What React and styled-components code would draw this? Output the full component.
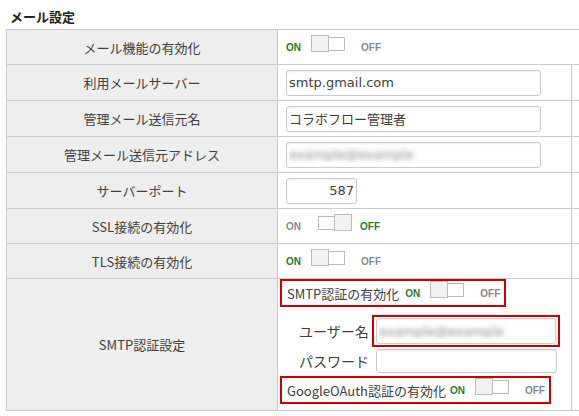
import React from 'react';
import styled, { createGlobalStyle } from 'styled-components';

const Global = createGlobalStyle`
html, body {
  margin:0;
  padding:0;
  background:#ffffff;
  overflow:hidden;
}
body {
  font-family:"Noto Sans CJK JP", sans-serif;
  font-size:13px;
  color:#3a3a3a;
}
`;

const Page = styled.div`
width:579px;
height:416px;
overflow:hidden;
`;

const Title = styled.h2`
margin:0 0 2px 0;
padding:7px 0 0 10px;
font-size:13px;
line-height:20px;
font-weight:bold;
color:#222222;
`;

const Table = styled.div`
display:grid;
grid-template-columns:271px 294px 60px;
margin-left:6px;
border-top:1px solid #cccccc;
border-left:1px solid #cccccc;
width:max-content;
`;

const Cell = styled.div`
box-sizing:border-box;
height:${props => props.h}px;
border-right:1px solid #cccccc;
border-bottom:1px solid #cccccc;
display:flex;
align-items:center;
`;

const LabelCell = styled(Cell)`
background-color:#eeeeee;
justify-content:center;
font-size:13px;
color:#404040;
`;

const ValueCell = styled(Cell)`
padding-left:8px;
grid-column:${props => props.span ? 'span 2' : 'auto'};
`;

const EmptyCell = styled(Cell)``;

const AuthCell = styled(Cell)`
flex-direction:column;
align-items:flex-start;
padding-left:2px;
color:#404040;
`;

const TextInput = styled.input`
box-sizing:border-box;
width:${props => props.w || 255}px;
height:${props => props.h || 26}px;
margin:0;
padding:0 2px;
border:1px solid #cccccc;
border-radius:3px;
box-shadow:inset 0 1px 2px rgba(0,0,0,0.07);
background:#ffffff;
font-family:"DejaVu Sans", "Noto Sans CJK JP", sans-serif;
font-size:13px;
color:#404040;
text-align:${props => props.right ? 'right' : 'left'};
outline:none;
`;

const BlurInput = styled(TextInput)`
color:transparent;
text-shadow:0 0 5px rgba(110,110,110,0.8);
`;

const StateText = styled.span`
font-family:"Liberation Sans", Arial, sans-serif;
font-size:10px;
font-weight:bold;
color:${props => props.active ? '#2b7a2b' : '#8a8a8a'};
margin-left:${props => props.gap || 0}px;
`;

const Track = styled.span`
position:relative;
box-sizing:border-box;
width:34px;
height:14px;
margin:0 ${props => props.on ? 16 : 8}px 6px ${props => props.on ? 10 : 17}px;
border:1px solid #bbbbbb;
background:#ffffff;
`;

const Knob = styled.span`
position:absolute;
top:-3px;
${props => props.on ? 'left:-1px;' : 'right:-1px;'}
box-sizing:border-box;
width:18px;
height:17px;
border:1px solid #bbbbbb;
background:#f2f2f2;
`;

const Highlight = styled.div`
box-sizing:border-box;
display:flex;
align-items:center;
border:2px solid #cc0000;
padding:${props => props.pad || '0 4px 0 5px'};
height:${props => props.h}px;
margin-top:${props => props.top || 0}px;
`;

const FieldRow = styled.div`
display:flex;
align-items:center;
padding-left:19px;
margin-top:${props => props.top || 0}px;
`;

const FieldLabel = styled.span`
width:73px;
font-size:14px;
`;

const Switch = ({on, gap}) => (
    <>
        <StateText active={on} gap={gap}>ON</StateText>
        <Track on={on}><Knob on={on}/></Track>
        <StateText active={!on}>OFF</StateText>
    </>
);

const App = () => {
    return(
        <Page>
            <Global/>
            <Title>メール設定</Title>
            <Table>
                <LabelCell h={35}>メール機能の有効化</LabelCell>
                <ValueCell h={35} span><Switch on/></ValueCell>

                <LabelCell h={36}>利用メールサーバー</LabelCell>
                <ValueCell h={36}><TextInput defaultValue="smtp.gmail.com"/></ValueCell>
                <EmptyCell h={36}/>

                <LabelCell h={36}>管理メール送信元名</LabelCell>
                <ValueCell h={36}><TextInput defaultValue="コラボフロー管理者"/></ValueCell>
                <EmptyCell h={36}/>

                <LabelCell h={36}>管理メール送信元アドレス</LabelCell>
                <ValueCell h={36}><BlurInput defaultValue="example@example"/></ValueCell>
                <EmptyCell h={36}/>

                <LabelCell h={36}>サーバーポート</LabelCell>
                <ValueCell h={36}><TextInput w={71} right defaultValue="587"/></ValueCell>
                <EmptyCell h={36}/>

                <LabelCell h={35}>SSL接続の有効化</LabelCell>
                <ValueCell h={35}><Switch on={false}/></ValueCell>
                <EmptyCell h={35}/>

                <LabelCell h={35}>TLS接続の有効化</LabelCell>
                <ValueCell h={35}><Switch on/></ValueCell>
                <EmptyCell h={35}/>

                <LabelCell h={132}>SMTP認証設定</LabelCell>
                <AuthCell h={132}>
                    <Highlight h={28}>
                        SMTP認証の有効化
                        <Switch on gap={6}/>
                    </Highlight>
                    <FieldRow top={8}>
                        <FieldLabel>ユーザー名</FieldLabel>
                        <Highlight h={32} pad="0 2px">
                            <BlurInput w={180} defaultValue="example@example"/>
                        </Highlight>
                    </FieldRow>
                    <FieldRow top={2}>
                        <FieldLabel>パスワード</FieldLabel>
                        <TextInput w={181} h={24} style={{marginLeft:4}} type="password"/>
                    </FieldRow>
                    <Highlight h={28} top={3}>
                        GoogleOAuth認証の有効化
                        <Switch on gap={4}/>
                    </Highlight>
                </AuthCell>
                <EmptyCell h={132}/>
            </Table>
        </Page>
    )
}

export default App;
